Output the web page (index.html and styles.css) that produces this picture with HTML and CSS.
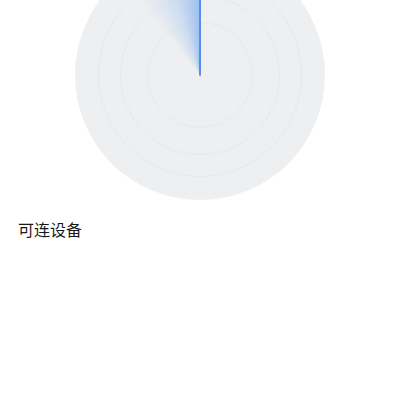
FILE: index.html
```html
<!DOCTYPE html>
<html lang="zh-CN">
<head>
    <meta charset="UTF-8">
    <meta name="viewport" content="width=device-width, initial-scale=1.0">
    <title>设备搜索</title>
    <link rel="stylesheet" href="styles.css">
</head>
<body>
    <div class="scan">
        <div class="radar">
            <div class="ring ring-3">
                <div class="ring ring-2">
                    <div class="ring ring-1"></div>
                </div>
            </div>
            <div class="sweep"></div>
            <div class="needle"></div>
        </div>
    </div>

    <h2 class="section-title">可连设备</h2>
    <div class="device-list">
        <!-- devices found will appear here -->
    </div>
</body>
</html>
```

FILE: styles.css
```css
body {
    font-family: "Noto Sans CJK SC", "Noto Sans", sans-serif;
    margin: 0;
    padding: 0;
    background: #ffffff;
    color: #1a1a1a;
    overflow: hidden;
}

.scan {
    display: flex;
    justify-content: center;
    margin-top: -50px;
}

.radar {
    position: relative;
    width: 250px;
    height: 250px;
    border-radius: 50%;
    background: #eeeff1;
    display: flex;
    align-items: center;
    justify-content: center;
    overflow: hidden;
}

.ring {
    border: 1px solid #e6e7ea;
    border-radius: 50%;
    display: flex;
    align-items: center;
    justify-content: center;
}

.ring-3 {
    width: 202px;
    height: 202px;
}

.ring-2 {
    width: 158px;
    height: 158px;
}

.ring-1 {
    width: 104px;
    height: 104px;
}

.sweep {
    position: absolute;
    inset: 0;
    border-radius: 50%;
    background: conic-gradient(from 0deg, rgba(238, 239, 241, 0) 0deg, rgba(238, 239, 241, 0) 320deg, rgba(150, 188, 240, 0.35) 342deg, rgba(130, 175, 240, 0.75) 360deg);
}

.needle {
    position: absolute;
    left: 124px;
    top: 0;
    width: 2px;
    height: 126px;
    background: #5590f0;
    border-radius: 1px;
}

.section-title {
    margin: 18px 18px 0;
    font-size: 16px;
    font-weight: 400;
    line-height: 22px;
    color: #1a1a1a;
}
```
